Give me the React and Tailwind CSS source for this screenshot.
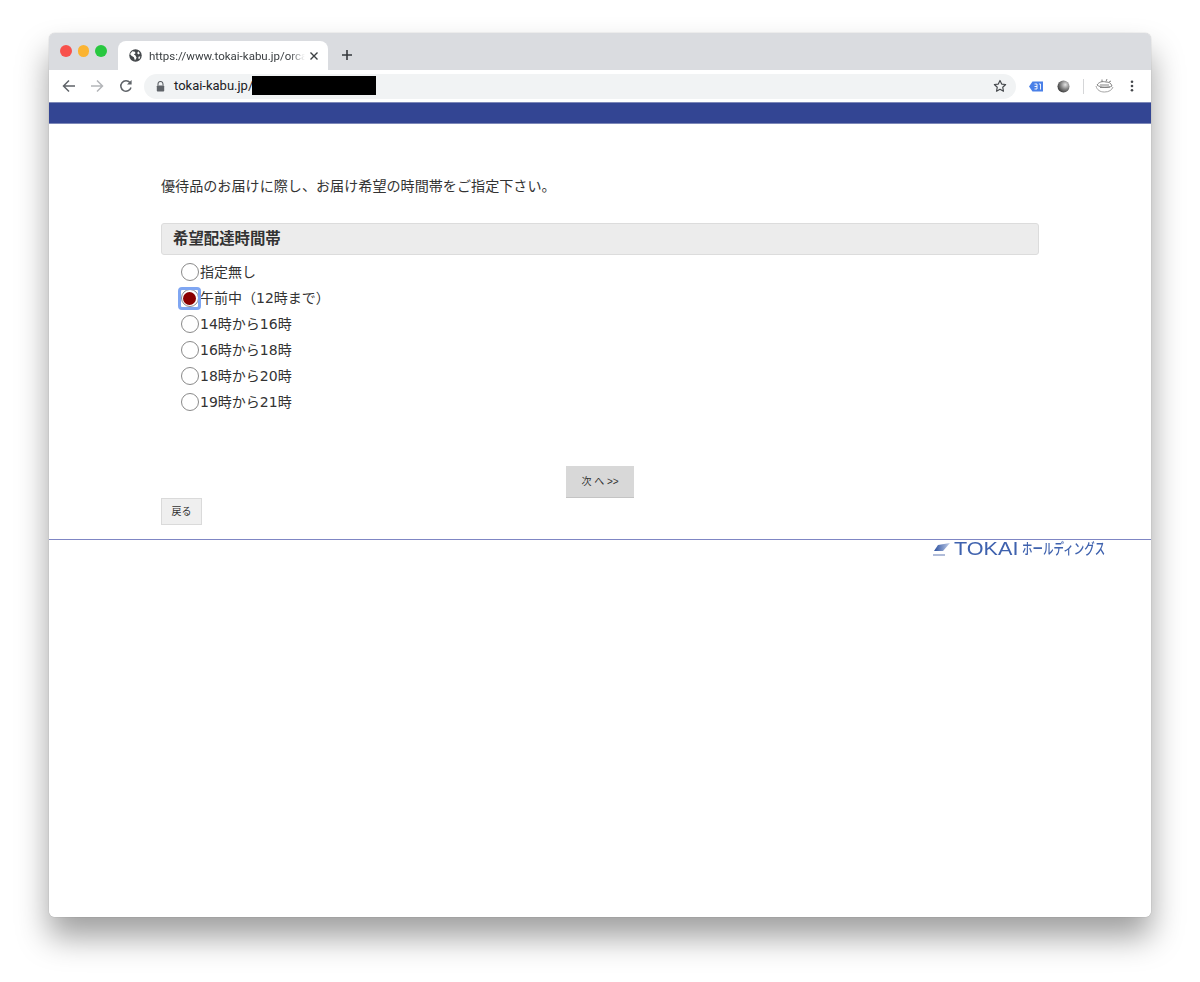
import React from "react";

const options = [
  ["指定無し", false],
  ["午前中（12時まで）", true],
  ["14時から16時", false],
  ["16時から18時", false],
  ["18時から20時", false],
  ["19時から21時", false],
];

function Radio({ label, checked }) {
  return (
    <div className="flex items-center h-[26px]">
      <span className="relative flex items-center justify-center w-[18px] h-[18px] rounded-full border border-[#8a8a8a] bg-white">
        {checked && <span className="absolute -inset-[3.5px] rounded-[4px] border-[3px] border-[#7fa6f2]" />}
        {checked && <span className="w-[13px] h-[13px] rounded-full bg-[#8b0000]" />}
      </span>
      <span className="ml-[1.5px] text-[14px] leading-[26px] text-[#333] font-['DejaVu_Sans','Noto_Sans_CJK_JP',sans-serif]">{label}</span>
    </div>
  );
}

export default function App() {
  return (
    <div className="w-[1200px] h-[982px] bg-white pt-[33px] pl-[49px] overflow-hidden font-['Liberation_Sans','Noto_Sans_CJK_JP',sans-serif]">
      <div className="w-[1102px] h-[884px] rounded-[6px] bg-white overflow-hidden flex flex-col shadow-[0_20px_32px_rgba(0,0,0,0.38),0_0_1px_rgba(0,0,0,0.4)]">
        {/* tab strip */}
        <div className="h-[37px] bg-[#dadce0] flex items-end shrink-0">
          <div className="flex items-center gap-[6px] pl-[11px] pb-[1px] w-[69px] h-[37px]">
            <span className="w-[11.5px] h-[11.5px] rounded-full bg-[#f8514c] shrink-0" />
            <span className="w-[11.5px] h-[11.5px] rounded-full bg-[#fbb432] shrink-0" />
            <span className="w-[11.5px] h-[11.5px] rounded-full bg-[#28c840] shrink-0" />
          </div>
          <div className="w-[210px] h-[29px] bg-white rounded-t-[8px] flex items-center pl-[11px] pr-[9px]">
            <svg width="13" height="13" viewBox="0 0 24 24" className="shrink-0">
              <circle cx="12" cy="12" r="11.5" fill="#45484c" />
              <path d="M6 4l5 1 1 3-3 2 3 2 2 4-3 5-2-6-5-3-2-3zM17 4l3 4-2 2-3-2zM18 14l3 0-2 5-2-2z" fill="#fff" />
            </svg>
            <div className="ml-[7px] w-[156px] whitespace-nowrap text-[11.5px] leading-[16px] text-[#3c4043] font-['Roboto','Liberation_Sans',sans-serif] [mask-image:linear-gradient(to_right,black_90%,transparent)]">
              https://www.tokai-kabu.jp/orca
            </div>
            <svg width="10" height="10" viewBox="0 0 10 10" className="ml-[4px] shrink-0">
              <path d="M1.5 1.5l7 7M8.5 1.5l-7 7" stroke="#3c4043" strokeWidth="1.4" />
            </svg>
          </div>
          <svg width="12" height="12" viewBox="0 0 12 12" className="ml-[13px] mb-[9px] shrink-0">
            <path d="M6 1v10M1 6h10" stroke="#35383c" strokeWidth="1.6" />
          </svg>
        </div>
        {/* toolbar */}
        <div className="h-[32px] bg-white flex items-center shrink-0 relative">
          <svg width="14" height="14" viewBox="0 0 14 14" className="ml-[12.5px] shrink-0">
            <path d="M13 7H2M7 1.5L1.5 7 7 12.5" fill="none" stroke="#5f6368" strokeWidth="1.5" />
          </svg>
          <svg width="14" height="14" viewBox="0 0 14 14" className="ml-[14px] shrink-0">
            <path d="M1 7h11M7 1.5L12.5 7 7 12.5" fill="none" stroke="#b4b6b9" strokeWidth="1.5" />
          </svg>
          <svg width="14" height="14" viewBox="0 0 14 14" className="ml-[15px] shrink-0">
            <path d="M12 8.5A5.2 5.2 0 1 1 11 3.6" fill="none" stroke="#5f6368" strokeWidth="1.5" />
            <path d="M12.6 1v4.6H8z" fill="#5f6368" />
          </svg>
          <div className="ml-[11.5px] w-[872px] h-[25px] rounded-full bg-[#f1f3f4] flex items-center relative shrink-0">
            <svg width="9" height="11" viewBox="0 0 9 11" className="ml-[12px] shrink-0">
              <path d="M2 4.5V3a2.5 2.5 0 0 1 5 0v1.5" fill="none" stroke="#5f6368" strokeWidth="1.1" />
              <rect x="0.8" y="4.5" width="7.4" height="6" rx="0.8" fill="#5f6368" />
            </svg>
            <span className="ml-[9px] text-[13px] leading-[16px] text-[#202124] font-['Roboto','Liberation_Sans',sans-serif]">tokai-kabu.jp/</span>
            <span className="absolute left-[108px] top-[2px] w-[124px] h-[19px] bg-black" />
            <svg width="14" height="14" viewBox="0 0 24 24" className="absolute right-[9px] top-[5.5px]">
              <path d="M12 2.5l2.9 6.2 6.8.8-5 4.7 1.3 6.8-6-3.4-6 3.4 1.3-6.8-5-4.7 6.8-.8z" fill="none" stroke="#45484c" strokeWidth="2" strokeLinejoin="round" />
            </svg>
          </div>
          <svg width="14" height="11" viewBox="0 0 14 11" className="ml-[13px] shrink-0">
            <path d="M0 5.500L3.500 .5h10.500v10H3.500z" fill="#4a80e8" />
            <path d="M5.500 3h2.500v5H5.500M5.500 5.500H8M10 3h1.500v5.500" fill="none" stroke="#fff" strokeWidth="0.9" />
          </svg>
          <svg width="13" height="13" viewBox="0 0 13 13" className="ml-[14px] shrink-0">
            <defs>
              <radialGradient id="orb" cx="0.65" cy="0.35" r="0.7">
                <stop offset="0" stopColor="#e4e4e4" />
                <stop offset="0.5" stopColor="#8a8a8a" />
                <stop offset="1" stopColor="#3a3a3a" />
              </radialGradient>
            </defs>
            <circle cx="6.500" cy="6.500" r="6" fill="url(#orb)" />
          </svg>
          <span className="ml-[13px] w-px h-[15px] bg-[#d5d6d8] shrink-0" />
          <svg width="19" height="16" viewBox="0 0 19 16" className="ml-[11px] shrink-0">
            <path d="M1 8c1 4 4 6 8.500 6S17 12 18 9" fill="none" stroke="#9a9a9a" strokeWidth="0.9" />
            <path d="M2 7c2-3 5-4 9-3 3 0 5 1 6 4-3 2-11 2-15-1zM5 7l9 0M5 9.500l10-.500M7 4l0-2.500M11 3.500l1-2.500M14 4l2-1" fill="none" stroke="#777" strokeWidth="0.9" />
          </svg>
          <svg width="4" height="12" viewBox="0 0 4 12" className="ml-[16px] shrink-0">
            <circle cx="2" cy="1.700" r="1.300" fill="#45484c" />
            <circle cx="2" cy="6" r="1.300" fill="#45484c" />
            <circle cx="2" cy="10.300" r="1.300" fill="#45484c" />
          </svg>
        </div>
        {/* page */}
        <div className="h-[22px] bg-[#334593] border-y border-[#7d88b8] shrink-0" />
        <div className="flex-1 bg-white text-[#333]">
          <div className="ml-[112px] w-[878px] pt-[52px]">
            <p className="text-[14.1px] leading-[20px] text-[#333]">優待品のお届けに際し、お届け希望の時間帯をご指定下さい。</p>
            <h2 className="mt-[27px] h-[32px] bg-[#ececec] border border-[#dcdcdc] rounded-[3px] pl-[11px] flex items-center text-[15.4px] font-bold text-[#333]">希望配達時間帯</h2>
            <div className="mt-[4px] pl-[19.5px]">
              {options.map(([label, checked]) => (
                <Radio key={label} label={label} checked={checked} />
              ))}
            </div>
            <div className="mt-[51px] flex justify-center">
              <button className="w-[68px] h-[32px] bg-[#d8d8d8] border-b border-[#c4c4c4] text-[10px] text-[#333]">次 へ &gt;&gt;</button>
            </div>
            <button className="block w-[41px] h-[27px] bg-[#efefef] border border-[#dadada] text-[10px] text-[#333]">戻る</button>
          </div>
          <div className="mt-[14px] h-[1px] bg-[#7f86c4]" />
          <div className="flex justify-end pr-[46px] h-[18px] items-center">
            <svg width="19" height="15" viewBox="0 0 19 15" className="mr-[3px] shrink-0">
              <defs>
                <linearGradient id="lg" x1="0" x2="1" y1="0" y2="0">
                  <stop offset="0" stopColor="#2a4f9e" />
                  <stop offset="1" stopColor="#c3cfe9" />
                </linearGradient>
              </defs>
              <path d="M2 9l4-6 12-2-7 8z" fill="url(#lg)" />
              <path d="M1 13h12" stroke="#7b8fc0" strokeWidth="1.200" />
            </svg>
            <span className="inline-block w-[68px] origin-left scale-x-[1.2] text-[18px] leading-[18px] text-[#3f62ae] whitespace-nowrap">TOKAI</span>
            <span className="inline-block w-[83px] origin-left scale-x-[0.7] text-[15px] leading-[18px] font-medium text-[#3f62ae] whitespace-nowrap">ホールディングス</span>
          </div>
        </div>
      </div>
    </div>
  );
}
